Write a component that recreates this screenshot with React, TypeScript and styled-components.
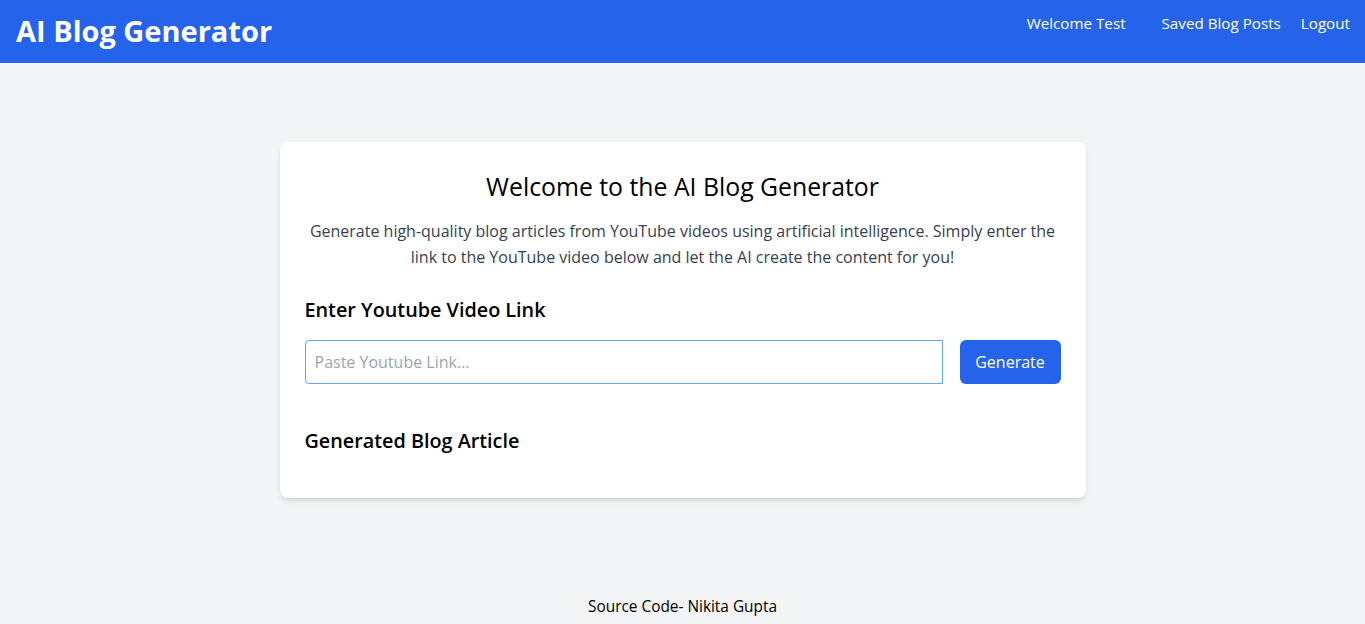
import React from "react";
import styled, { createGlobalStyle } from "styled-components";

const Global = createGlobalStyle`
  html, body { margin: 0; padding: 0; }
  body {
    font-family: "Open Sans", "Noto Sans", sans-serif;
    background: #f3f4f6;
    color: #000;
  }
  * { box-sizing: border-box; }
`;

const Page = styled.div`
  min-height: 624px;
  display: flex;
  flex-direction: column;
`;

const Header = styled.header`
  background: #2563eb;
  color: #fff;
  height: 63px;
  display: flex;
  justify-content: space-between;
  align-items: flex-start;
  padding: 0 15px 0 16px;
`;

const Brand = styled.h1`
  margin: 13px 0 0;
  font-size: 29px;
  line-height: 36px;
  font-weight: 700;
`;

const Nav = styled.nav`
  display: flex;
  align-items: center;
  margin-top: 11px;
`;

const NavItem = styled.a<{ $gap?: number }>`
  color: #fff;
  text-decoration: none;
  font-size: 15.2px;
  line-height: 24px;
  margin-left: ${(p) => p.$gap ?? 0}px;
`;

const Main = styled.main`
  flex: 1;
  display: flex;
  justify-content: center;
  padding-top: 79px;
`;

const Card = styled.section`
  width: 806px;
  align-self: flex-start;
  background: #fff;
  border-radius: 8px;
  box-shadow: 0 4px 6px -1px rgba(0, 0, 0, 0.1), 0 2px 4px -2px rgba(0, 0, 0, 0.1);
  padding: 28px 25px 43px;
`;

const Title = styled.h2`
  margin: 0;
  text-align: center;
  font-size: 24.8px;
  line-height: 32px;
  font-weight: 500;
`;

const Lead = styled.p`
  margin: 16px 0 0;
  text-align: center;
  color: #374151;
  font-size: 16px;
  line-height: 26px;
`;

const Section = styled.div<{ $top: number }>`
  margin-top: ${(p) => p.$top}px;
`;

const SubTitle = styled.h3`
  margin: 0;
  font-size: 19.8px;
  line-height: 28px;
  font-weight: 600;
`;

const Row = styled.div`
  display: flex;
  gap: 17px;
  margin-top: 16px;
`;

const Input = styled.input`
  flex: 1;
  height: 44px;
  border: 1px solid #60a5fa;
  border-radius: 4px 0 0 4px;
  padding: 0 9px;
  font: inherit;
  font-size: 16px;
  outline: none;
  &::placeholder { color: #9ca3af; }
`;

const Button = styled.button`
  width: 101px;
  height: 44px;
  background: #2563eb;
  color: #fff;
  border: none;
  border-radius: 6px;
  font: inherit;
  font-size: 16px;
`;

const Footer = styled.footer`
  text-align: center;
  font-size: 15.4px;
  line-height: 24px;
  padding: 0 0 5px;
`;

export default function App() {
  return (
    <Page>
      <Global />
      <Header>
        <Brand>AI Blog Generator</Brand>
        <Nav>
          <NavItem href="#">Welcome Test</NavItem>
          <NavItem href="#" $gap={36}>Saved Blog Posts</NavItem>
          <NavItem href="#" $gap={20}>Logout</NavItem>
        </Nav>
      </Header>
      <Main>
        <Card>
          <Title>Welcome to the AI Blog Generator</Title>
          <Lead>
            Generate high-quality blog articles from YouTube videos using artificial intelligence. Simply enter the
            link to the YouTube video below and let the AI create the content for you!
          </Lead>
          <Section $top={26}>
            <SubTitle>Enter Youtube Video Link</SubTitle>
            <Row>
              <Input placeholder="Paste Youtube Link..." />
              <Button>Generate</Button>
            </Row>
          </Section>
          <Section $top={43}>
            <SubTitle>Generated Blog Article</SubTitle>
          </Section>
        </Card>
      </Main>
      <Footer>Source Code- Nikita Gupta</Footer>
    </Page>
  );
}
